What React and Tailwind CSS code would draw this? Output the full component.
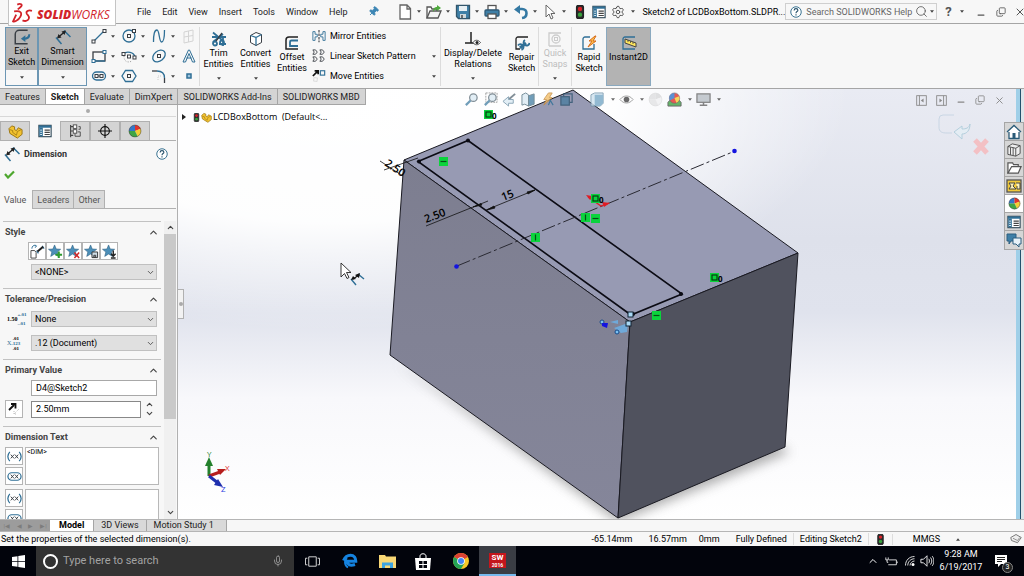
import React from "react";
import {
  ChevronDown,
  ChevronUp,
  Copy,
  Minus,
  Mic,
  Pin,
  Search,
  Settings,
  X,
} from "lucide-react";

const BLUE = "#2f6f96";
const DARK = "#3a3f45";

const Svg = ({ size = 16, children, className = "" }) => (
  <svg
    width={size}
    height={size}
    viewBox="0 0 16 16"
    fill="none"
    stroke={BLUE}
    strokeWidth="1.3"
    className={`shrink-0 ${className}`}
    aria-hidden="true"
  >
    {children}
  </svg>
);

const Caret = ({ className = "", up = false }) => (
  <svg width="4" height="3" viewBox="0 0 5 3" className={`shrink-0 ${className}`} aria-hidden="true">
    <path d={up ? "M0 3h5L2.5 0z" : "M0 0h5L2.5 3z"} fill="#444" />
  </svg>
);

/* ---------- icons ---------- */

const DimensionIcon = ({ size = 18 }) => (
  <Svg size={size}>
    <path d="M1 8.500 6.500 15M9 1.500l6.500 6.500" strokeWidth="1.500" />
    <path d="m3 8.500 7-6" stroke="#222" />
    <path d="m2 9.500 1.500-4.500 3 3.500zM11 1.500 9.500 6 6.500 2.500z" fill="#222" stroke="none" />
  </Svg>
);

const ExitSketchIcon = () => (
  <Svg size={18}>
    <path d="M13 2H5.500A3.500 3.500 0 0 0 2 5.500V14h11" stroke={DARK} />
    <path d="M14.500 5.500c0 3-1.500 4-5 4" stroke={BLUE} strokeWidth="1.8" />
    <path d="m7 9.500 4-3v6z" fill={BLUE} stroke="none" />
  </Svg>
);

const LineIcon = () => (
  <Svg>
    <path d="M2.500 13.500 13 3" />
    <rect x="1" y="12" width="3" height="3" fill="#fff" stroke={DARK} strokeWidth="1" />
    <rect x="12" y="1.500" width="3" height="3" fill="#fff" stroke={DARK} strokeWidth="1" />
  </Svg>
);
const CircleIcon = () => (
  <Svg>
    <circle cx="8" cy="8" r="6" />
    <rect x="6.500" y="6.500" width="3" height="3" stroke={DARK} strokeWidth="1" />
    <rect x="11.500" y="1.500" width="3" height="3" fill="#fff" stroke={DARK} strokeWidth="1" />
  </Svg>
);
const SplineIcon = () => (
  <Svg>
    <path d="M2.500 14c0-8 1-12 3.500-12s2 12 4.500 12 3-4 3-12" />
  </Svg>
);
const PlaneIcon = () => (
  <Svg>
    <path d="M3 4l9-2v11l-9 2zM3 9l9-1.500M7.500 3v11" stroke="#d4d4d4" strokeWidth="1" />
  </Svg>
);
const RectIcon = () => (
  <Svg>
    <rect x="2" y="4" width="12" height="9" stroke={DARK} />
    <path d="M2 13h12" />
    <rect x="12" y="2.500" width="3" height="3" fill="#fff" strokeWidth="1" />
    <rect x="1" y="11.500" width="3" height="3" fill="#fff" strokeWidth="1" />
  </Svg>
);
const ArcIcon = () => (
  <Svg>
    <path d="M2 6a7 6 0 0 1 12 3" />
    <path d="M3 8c0 6 4 7 8 5" stroke="#999" strokeDasharray="1 1.500" strokeWidth="1" />
    <rect x="1" y="4.500" width="3" height="3" fill="#fff" stroke={DARK} strokeWidth="1" />
    <rect x="6.500" y="7" width="3" height="3" stroke={DARK} strokeWidth="1" />
    <rect x="12" y="8" width="3" height="3" fill="#fff" stroke={DARK} strokeWidth="1" />
  </Svg>
);
const EllipseIcon = () => (
  <Svg>
    <ellipse cx="8" cy="8" rx="7" ry="5" transform="rotate(-40 8 8)" />
    <rect x="6.500" y="6.500" width="3" height="3" stroke={DARK} strokeWidth="1" />
  </Svg>
);
const LetterIcon = () => (
  <Svg>
    <path d="M2 14 7.500 2h1L14 14h-2.500L8 5.500 4.500 14zM5.500 10h5" strokeWidth="1" />
  </Svg>
);
const SlotIcon = () => (
  <Svg>
    <rect x="1.500" y="4" width="13" height="8" rx="4" />
    <rect x="4" y="6.500" width="3" height="3" stroke={DARK} strokeWidth="1" />
    <rect x="9" y="6.500" width="3" height="3" stroke={DARK} strokeWidth="1" />
    <path d="M7 8h2" stroke={DARK} strokeWidth="1" />
  </Svg>
);
const PolygonIcon = () => (
  <Svg>
    <path d="M4.500 2.500h7L15 8l-3.500 5.500h-7L1 8z" />
    <rect x="6.500" y="6.500" width="3" height="3" stroke={DARK} strokeWidth="1" />
  </Svg>
);
const FilletIcon = () => (
  <Svg>
    <path d="M1 3h5" stroke={DARK} />
    <path d="M6 3c5 0 7.500 2 7.500 7" />
    <path d="M13.500 10v5" stroke={DARK} />
    <path d="M7 12V8h4" stroke="#ccc" strokeDasharray="1 1" strokeWidth="1" />
  </Svg>
);
const PointIcon = () => (
  <Svg>
    <rect x="6" y="6" width="4" height="4" fill="#9cc3dc" strokeWidth="1.500" />
  </Svg>
);

const TrimIcon = () => (
  <Svg>
    <path d="M2 1.500 11 9M1 6h14M2 11 12 3M12 6v9M8 13h7" strokeWidth="1.800" />
    <circle cx="4" cy="12.500" r="2" strokeWidth="1.800" />
    <circle cx="11" cy="11.500" r="2" strokeWidth="1.800" />
    <path d="M5 10l6-8" stroke={DARK} />
  </Svg>
);
const CubeIcon = () => (
  <Svg>
    <path d="M2.500 4.500 8 1.500l5.500 2v8L8 14.500l-5.500-3z" fill="#fff" stroke={DARK} strokeWidth="1" />
    <path d="M2.500 4.500 8 6.500v8M8 6.500l5.500-3" stroke={BLUE} />
  </Svg>
);
const OffsetIcon = () => (
  <Svg>
    <path d="M14 2H5a3 3 0 0 0-3 3v9h12" stroke="#222" strokeWidth="1.500" />
    <path d="M14 5.500H7.500A1.500 1.500 0 0 0 6 7v4h8" strokeWidth="1.800" />
  </Svg>
);
const MirrorIcon = () => (
  <Svg size={14}>
    <path d="M8 1v14" stroke={DARK} strokeDasharray="3 1" />
    <path d="M1 3v10h2.500V9H6V6H3.500V3zM15 3v10h-2.500V9H10V6h2.500V3z" strokeWidth="1" />
  </Svg>
);
const PatternIcon = () => (
  <Svg size={14}>
    {[1, 9].map((y) =>
      [1, 9].map((x) => (
        <path key={`${x}-${y}`} d={`M${x} ${y}h3l2 2.500-2 2.500h-3l1.500-2.500z`} stroke={DARK} strokeWidth="1" />
      ))
    )}
  </Svg>
);
const MoveIcon = () => (
  <Svg size={14}>
    <path d="M1 8 6 3M3 2h4v4" stroke="#111" strokeWidth="2" />
    <rect x="9.500" y="2" width="5" height="5" />
    <path d="M2 10h4v4H2z" stroke="#bbb" strokeDasharray="1 1" strokeWidth="1" />
  </Svg>
);
const RelationsIcon = () => (
  <Svg>
    <path d="M6 1v11M0 12h10" stroke="#222" strokeWidth="1.500" />
    <path d="M8 11.500c2-3 5-3 7.500 0-2.500 3-5.500 3-7.500 0z" fill="#fff" stroke="#444" strokeWidth="1" />
    <circle cx="12" cy="11.500" r="1.500" fill="#222" stroke="none" />
  </Svg>
);
const RepairIcon = () => (
  <Svg>
    <path d="M14 2H4a2 2 0 0 0-2 2v10h4" stroke="#222" />
    <path d="m6 13 6-5" strokeWidth="3" />
    <path d="M11 5a3 3 0 1 0 4.500 3M4 10.500a3 3 0 1 1 3.500 4.500" strokeWidth="1.800" />
  </Svg>
);
const SnapsIcon = () => (
  <Svg>
    <path d="M2 15V2h12M2 15h12" stroke="#ccc" />
    <circle cx="9" cy="8" r="4" stroke="#ccc" />
    <rect x="7.500" y="6.500" width="3" height="3" stroke="#ccc" strokeWidth="1" />
  </Svg>
);
const RapidIcon = () => (
  <Svg>
    <path d="M9 2H4a2 2 0 0 0-2 2v10h11V9" stroke={BLUE} />
    <path d="m14 1-6 5h3l-4 6 8-6h-3l3-5z" fill="#ffc24d" stroke="#d56b1a" strokeWidth="1" />
  </Svg>
);
const InstantIcon = () => (
  <Svg>
    <path d="M14 2H4a2 2 0 0 0-2 2v10h12" stroke={BLUE} />
    <path d="m4 4 11 4v4L4 8z" fill="#ffe65c" stroke="#444" strokeWidth="1" />
    <path d="M7 5v2M9.500 6v2M12 7v2" stroke="#444" strokeWidth=".8" />
  </Svg>
);

const NewIcon = () => (
  <Svg>
    <path d="M3 1h7l3.500 3.500V15H3zM10 1v4h3.500" fill="#fff" stroke="#666" />
  </Svg>
);
const OpenIcon = () => (
  <Svg>
    <path d="M1 14V3h4l1 2h5v3" fill="#fff" stroke="#555" />
    <path d="m1 14 3-7h11l-3 7z" fill="#f4f4f4" stroke="#555" />
    <path d="M7 8c0-4 2-5 4-5V1l4 3-4 3V5.500C9 5.500 8 6 7 8z" fill="#4faa3d" stroke="none" />
  </Svg>
);
const SaveIcon = () => (
  <Svg>
    <path d="M1.500 1.500h13v13h-11l-2-2z" fill="#3f7fa6" stroke="#33566b" />
    <rect x="4" y="2" width="8" height="5" fill="#e8f0f4" stroke="none" />
    <rect x="5" y="10" width="6" height="4" fill="#cfd8dc" stroke="none" />
    <path d="M7 11v3" stroke="#333" />
  </Svg>
);
const PrintIcon = () => (
  <Svg>
    <rect x="4" y="1.500" width="8" height="5" fill="#fff" stroke="#555" />
    <rect x="1" y="6" width="14" height="6" rx="1" fill="#3f7fa6" stroke="#2f5a76" />
    <rect x="4" y="10" width="8" height="4.500" fill="#fff" stroke="#555" />
  </Svg>
);
const UndoIcon = () => (
  <Svg>
    <path d="M4 5h5c6 0 6 8 0 9" strokeWidth="2.600" stroke="#3579a3" />
    <path d="M1 5.500 7 1v9z" fill="#3579a3" stroke="none" />
  </Svg>
);
const ArrowIcon = () => (
  <Svg>
    <path d="M4 1v12l3-3 2 5 2-1-2-4.500h4z" fill="#fff" stroke="#666" strokeWidth="1" />
  </Svg>
);
const TrafficIcon = ({ size = 14 }) => (
  <Svg size={size}>
    <rect x="4" y="0.500" width="8" height="15" rx="2" fill="#2b2b2b" stroke="#222" />
    <circle cx="8" cy="4.500" r="2.500" fill="#d8232a" stroke="none" />
    <circle cx="8" cy="11" r="2.500" fill="#38a13c" stroke="none" />
  </Svg>
);
const ListIcon = ({ size = 14 }) => (
  <Svg size={size}>
    <rect x="1" y="1.500" width="14" height="13" fill="#fff" stroke="#334b5a" />
    <path d="M1 3h14" strokeWidth="2.500" />
    <path d="M3.500 4v10" strokeWidth="4" />
    <path d="M7.500 7h6M7.500 9.500h6M7.500 12h6" stroke="#444" />
    <path d="M2.500 7h2M2.500 9.500h2M2.500 12h2" stroke="#fff" strokeWidth="1" />
  </Svg>
);
const HelpIcon = ({ size = 12 }) => (
  <Svg size={size}>
    <circle cx="8" cy="8" r="7" fill="#fff" stroke="#36708f" />
    <path d="M5.500 6c0-3.500 5-3 5-.5 0 1.800-2.500 1.800-2.500 4M8 11v1.800" stroke="#26516a" strokeWidth="1.500" />
  </Svg>
);
const BallIcon = ({ size = 15, faded = false }) => (
  <Svg size={size} className={faded ? "opacity-20 grayscale" : ""}>
    <circle cx="8" cy="8" r="7" fill="#d9d9d9" stroke="none" />
    <path d="M8 8V1a7 7 0 0 0-7 7z" fill="#3477c9" stroke="none" />
    <path d="M8 8V1a7 7 0 0 1 6.500 4.500z" fill="#e2332b" stroke="none" />
    <path d="m8 8 6.500-2.500A7 7 0 0 1 11 14.300z" fill="#f4cf35" stroke="none" />
    <path d="M8 8 1 8a7 7 0 0 0 10 6.300z" fill="#3fa544" stroke="none" />
    <circle cx="8" cy="8" r="6.800" stroke="#444" strokeWidth=".6" />
  </Svg>
);
const PartIcon = ({ size = 15 }) => (
  <Svg size={size}>
    <path
      d="M1 5 4 2l3 1v3l2 1 2-3 4 2v5l-5 4-8-5z"
      fill="#f2c230"
      stroke="#9a7410"
      strokeWidth="1"
    />
    <path d="m2 6 3 1v2l4 3 1-4 4-2" stroke="#9a7410" strokeWidth=".8" />
  </Svg>
);
const ConfigIcon = () => (
  <Svg size={14}>
    <path d="M3 1v14M3 3h3M3 8h3M3 13h3" stroke="#444" />
    <rect x="6" y="1" width="4" height="4" fill="#fff" stroke="#444" strokeWidth="1" />
    <rect x="6" y="6.500" width="4" height="4" fill="#fff" stroke="#444" strokeWidth="1" />
    <path d="M12 3h2v3h-2M11 9h3v5H8v-3" stroke="#444" strokeWidth="1" />
  </Svg>
);
const TargetIcon = () => (
  <Svg size={14}>
    <circle cx="8" cy="8" r="5" stroke="#111" />
    <path d="M8 0v16M0 8h16" stroke="#111" />
  </Svg>
);

const StarIcon = ({ kind }) => (
  <Svg size={15}>
    <path
      d="m7 1 1.800 4.300 4.700.3-3.600 3 1.200 4.600L7 10.700l-4.100 2.500 1.200-4.600-3.600-3 4.700-.3z"
      fill="#4c8fb8"
      stroke="#2c5f80"
      strokeWidth=".6"
    />
    {kind === "add" && <path d="M11.500 8v7M8 11.500h7" stroke="#2e9b2e" strokeWidth="2.200" />}
    {kind === "remove" && <path d="m9 9 5 6M14 9l-5 6" stroke="#d42a2a" strokeWidth="1.600" />}
    {kind === "save" && <path d="M8.500 8.500h6v6h-6zM10.500 12h2v2h-2z" fill="#cfdde6" stroke="#333" strokeWidth="1" />}
    {kind === "load" && <path d="M12 7v6M9.500 10.500 12 13l2.500-2.500M9.500 15h5" stroke="#222" strokeWidth="1.500" />}
  </Svg>
);
const ApplyDefaultIcon = () => (
  <Svg size={15}>
    <path d="M1 7h4l1.500 2v6H1z" fill="#fff" stroke="#444" strokeWidth="1" />
    <path d="M2 5c0-3 2-4 4-3M5 1l2 1-1.500 2" strokeWidth="1" />
    <path d="m7 7 2 3M13 2l2 3" />
    <path d="m8 8 6-5" stroke="#222" strokeWidth="2.200" />
  </Svg>
);

const WrapIcon = ({ boxed }) => (
  <Svg size={15}>
    {boxed ? (
      <rect x="1" y="4" width="14" height="8" rx="4" />
    ) : (
      <path d="M3 3C.5 6 .5 10 3 13M13 3c2.500 3 2.500 7 0 10" />
    )}
    <path d="m4 6 3.500 4M7.500 6 4 10M8.500 6l3.500 4M12 6l-3.500 4" stroke={DARK} strokeWidth="1" />
  </Svg>
);

/* ---------- title bar ---------- */

const menus = ["File", "Edit", "View", "Insert", "Tools", "Window", "Help"];

const quickTools = [
  { name: "New", icon: <NewIcon /> },
  { name: "Open", icon: <OpenIcon /> },
  { name: "Save", icon: <SaveIcon /> },
  { name: "Print", icon: <PrintIcon /> },
  { name: "Undo", icon: <UndoIcon /> },
  { name: "Select", icon: <ArrowIcon /> },
];

const Logo = () => (
  <div className="absolute left-2 top-0 z-20 flex h-[26px] w-[108px] items-center border border-t-0 border-[#c4c4c4] bg-white px-[3px]">
    <svg width="21" height="20" viewBox="0 0 20 19" fill="none" stroke="#d2232a" strokeWidth="1.700" aria-hidden="true">
      <path d="M5 1.500c3-1.500 6 0 3 2.500L5.500 6M2 8c6-1 8 1 6 5s-6 5-7 4.500L4 11" />
      <path d="M19 7.500c-3-1-6 0-5 2.500 1 2 3 2.500 2 5s-4 2.500-6 1.500" />
    </svg>
    <span className="ml-1 pt-1 font-['Open_Sans',sans-serif] text-[12px] leading-4 text-[#d2232a]">
      <b className="font-extrabold italic">SOLID</b>
      <i>WORKS</i>
    </span>
  </div>
);

const TitleBar = () => (
  <header className="relative flex h-6 shrink-0 items-center border-b border-[#a5a5a5] bg-[#f7f7f7] pl-[137px]">
    <Logo />
    <nav className="flex gap-[11px]">
      {menus.map((m) => (
        <button key={m}>{m}</button>
      ))}
    </nav>
    <button aria-label="Pin menu" className="ml-5">
      <Pin size={11} className="rotate-45 fill-[#3d86b5] text-[#3d86b5]" />
    </button>
    <div className="ml-2 h-full w-px bg-[#a5a5a5]" />
    <div className="ml-2.5 flex items-center gap-[5px]">
      {quickTools.map((q) => (
        <button key={q.name} aria-label={q.name} className="flex w-6 items-center justify-between">
          {q.icon}
          <Caret />
        </button>
      ))}
      <button aria-label="Rebuild" className="ml-0.5"><TrafficIcon /></button>
      <button aria-label="File properties"><ListIcon /></button>
      <button aria-label="Options" className="flex items-center gap-1.5">
        <Settings size={14} strokeWidth={1.5} className="text-[#444]" />
        <Caret />
      </button>
    </div>
    <span className="ml-2 flex-1 whitespace-nowrap text-black">Sketch2 of LCDBoxBottom.SLDPR...</span>
    <label className="flex h-[17px] w-[152px] shrink-0 items-center border border-[#cfcfcf] pl-1">
      <HelpIcon />
      <input
        aria-label="Search SOLIDWORKS Help"
        placeholder="Search SOLIDWORKS Help"
        className="ml-1 min-w-0 flex-1 bg-transparent outline-none placeholder:text-[#666]"
      />
      <Search size={13} strokeWidth={1.5} className="mr-0.5 shrink-0 text-[#555]" />
      <Caret className="mr-0.5" />
    </label>
    <div className="ml-2 flex shrink-0 items-center text-[#555]">
      <button className="text-[13px] font-bold" aria-label="Help">?</button>
      <Caret className="ml-2 mr-3" />
      <button aria-label="Minimize"><Minus size={10} strokeWidth={3} className="mt-1.5" /></button>
      <button aria-label="Restore" className="ml-2.5"><Copy size={10} className="-scale-y-100" /></button>
      <button aria-label="Close" className="ml-2 mr-1"><X size={12} /></button>
    </div>
  </header>
);

/* ---------- ribbon ---------- */

const sketchTools = [
  [
    { name: "Line", icon: <LineIcon />, more: true },
    { name: "Circle", icon: <CircleIcon />, more: true },
    { name: "Spline", icon: <SplineIcon />, more: true },
    { name: "Plane", icon: <PlaneIcon /> },
  ],
  [
    { name: "Rectangle", icon: <RectIcon />, more: true },
    { name: "Arc", icon: <ArcIcon />, more: true },
    { name: "Ellipse", icon: <EllipseIcon />, more: true },
    { name: "Text", icon: <LetterIcon /> },
  ],
  [
    { name: "Slot", icon: <SlotIcon />, more: true },
    { name: "Polygon", icon: <PolygonIcon /> },
    { name: "Fillet", icon: <FilletIcon />, more: true },
    { name: "Point", icon: <PointIcon /> },
  ],
];

const BigButton = ({ icon, lines, more, className = "" }) => (
  <button className={`flex h-full flex-col items-center text-center leading-[11px] ${className}`}>
    <span className="flex h-[18px] items-center">{icon}</span>
    {lines.map((l) => (
      <span key={l} className="whitespace-nowrap">{l}</span>
    ))}
    {more && <Caret className="mb-0.5 mt-auto" />}
  </button>
);

const ActiveButton = ({ icon, lines, className = "" }) => (
  <button
    className={`flex h-[59px] flex-col items-center border border-[#6c96b3] bg-[#b3b3b3] text-center leading-[11px] ${className}`}
  >
    <span className="flex h-[18px] items-center">{icon}</span>
    {lines.map((l) => (
      <span key={l}>{l}</span>
    ))}
    <span className="mt-auto flex h-[15px] w-full items-center justify-center bg-[#f7f7f7]">
      <Caret />
    </span>
  </button>
);

const Separator = () => <div className="h-[59px] w-px shrink-0 bg-[#dcdcdc]" />;

const Ribbon = () => (
  <section className="flex h-[65px] shrink-0 items-center border-b border-[#a5a5a5] bg-[#f7f7f7] px-[5px] text-black">
    <ActiveButton icon={<ExitSketchIcon />} lines={["Exit", "Sketch"]} className="w-[33px]" />
    <ActiveButton icon={<DimensionIcon size={16} />} lines={["Smart", "Dimension"]} className="w-[49px]" />

    <div className="flex h-[56px] w-[112px] flex-col justify-between pl-1">
      {sketchTools.map((row) => (
        <div key={row[0].name} className="flex">
          {row.map((t) => (
            <button key={t.name} aria-label={t.name} className="flex w-[30px] items-center gap-1 last:w-4">
              {t.icon}
              {t.more && <Caret />}
            </button>
          ))}
        </div>
      ))}
    </div>
    <Separator />

    <div className="flex h-[52px]">
      <BigButton icon={<TrimIcon />} lines={["Trim", "Entities"]} more className="w-[37px]" />
      <BigButton icon={<CubeIcon />} lines={["Convert", "Entities"]} more className="w-[37px]" />
      <BigButton icon={<OffsetIcon />} lines={["Offset", "Entities"]} className="w-[36px] pt-1" />
    </div>
    <div className="ml-0.5 flex h-[54px] w-[128px] flex-col justify-between pr-1">
      <button className="flex items-center gap-1"><MirrorIcon />Mirror Entities</button>
      <button className="flex items-center gap-1">
        <PatternIcon />Linear Sketch Pattern<Caret className="ml-auto" />
      </button>
      <button className="flex items-center gap-1">
        <MoveIcon />Move Entities<Caret className="ml-auto" />
      </button>
    </div>
    <Separator />

    <div className="flex h-[52px]">
      <BigButton icon={<RelationsIcon />} lines={["Display/Delete", "Relations"]} more className="w-[64px]" />
      <BigButton icon={<RepairIcon />} lines={["Repair", "Sketch"]} className="w-[33px] pt-1" />
    </div>
    <Separator />
    <div className="flex h-[52px]">
      <BigButton icon={<SnapsIcon />} lines={["Quick", "Snaps"]} more className="w-8 text-[#bdbdbd]" />
    </div>
    <Separator />
    <div className="flex h-[52px]">
      <BigButton icon={<RapidIcon />} lines={["Rapid", "Sketch"]} className="w-[34px] pt-1" />
    </div>
    <div className="flex h-[59px] border border-[#8aa9bf] bg-[#b3b3b3]">
      <BigButton icon={<InstantIcon />} lines={["Instant2D"]} className="w-[43px] pt-1.5" />
    </div>
  </section>
);

const commandTabs = ["Features", "Sketch", "Evaluate", "DimXpert", "SOLIDWORKS Add-Ins", "SOLIDWORKS MBD"];

const CommandTabs = () => (
  <nav className="absolute left-0 top-0 z-10 flex h-4 border-b border-[#a5a5a5]">
    {commandTabs.map((t) => (
      <button
        key={t}
        className={
          t === "Sketch"
            ? "whitespace-nowrap border-r border-[#a5a5a5] bg-white px-[5px] font-bold"
            : "whitespace-nowrap border-r border-[#a5a5a5] bg-[#d4d4d4] px-[5px]"
        }
      >
        {t}
      </button>
    ))}
  </nav>
);

/* ---------- property manager ---------- */

const managerTabs = [
  { name: "Feature tree", icon: <PartIcon /> },
  { name: "Property manager", icon: <ListIcon /> },
  { name: "Configurations", icon: <ConfigIcon /> },
  { name: "DimXpert manager", icon: <TargetIcon /> },
  { name: "Display manager", icon: <BallIcon size={14} /> },
];

const Group = ({ title, children }) => (
  <section className="border-t border-[#c2c2c2] pb-2">
    <h3 className="flex h-5 items-center justify-between pl-0.5 pr-0.5 font-bold text-[#444]">
      {title}
      <ChevronUp size={11} strokeWidth={2.5} className="text-[#444]" />
    </h3>
    {children}
  </section>
);

const Select = ({ label, value }) => (
  <div className="relative mr-1 min-w-0 flex-1">
    <select
      aria-label={label}
      className="block h-4 w-full appearance-none border border-[#c0c0c0] bg-[#e0e0e0] px-[3px] leading-3 text-black"
    >
      <option>{value}</option>
    </select>
    <ChevronDown size={9} strokeWidth={2.5} className="pointer-events-none absolute right-0.5 top-1 text-[#555]" />
  </div>
);

const IconButton = ({ label, children }) => (
  <button aria-label={label} className="flex h-[18px] w-[18px] items-center justify-center border border-[#b4b4b4] bg-white">
    {children}
  </button>
);

const ToleranceIcon = () => (
  <span className="flex w-7 shrink-0 items-center font-['Liberation_Serif'] text-[6px] font-bold leading-[6px]">
    <span className="pl-1 text-black">1.50</span>
    <span className="flex flex-col gap-1 text-[5px] leading-[5px] text-[#2f6f96]">
      <span>+.01</span>
      <span>-.01</span>
    </span>
  </span>
);
const PrecisionIcon = () => (
  <span className="flex w-7 shrink-0 items-center font-['Liberation_Serif'] text-[5px] leading-[5px]">
    <span className="pl-1 text-[6px] text-[#2f6f96]">X.</span>
    <span className="flex flex-col font-bold text-black">
      <span>.01</span>
      <span className="text-[#2f6f96]">123</span>
      <span>.01</span>
    </span>
  </span>
);

const PropertyManager = () => (
  <aside className="flex w-[178px] shrink-0 flex-col border-r border-[#b0b0b0] bg-[#f7f7f7] pr-px pt-4">
    <div className="flex h-3 shrink-0 items-center justify-center border-b border-[#d8d8d8]">
      <span className="h-1 w-1 rounded-full bg-[#aaa]" />
    </div>

    <div className="mt-1 flex h-5 shrink-0 border-b border-[#b0b0b0]">
      {managerTabs.map((t) => (
        <button
          key={t.name}
          aria-label={t.name}
          className={
            t.name === "Property manager"
              ? "-mb-px flex w-[30px] items-center justify-center bg-[#f7f7f7]"
              : "flex w-[30px] items-center justify-center border-x border-t border-[#b0b0b0] bg-[#d4d4d4]"
          }
        >
          {t.icon}
        </button>
      ))}
    </div>

    <div className="flex h-[26px] shrink-0 items-center gap-1 pl-1 pr-2">
      <DimensionIcon size={16} />
      <h2 className="flex-1 font-bold text-[#333]">Dimension</h2>
      <HelpIcon />
    </div>
    <button aria-label="OK" className="ml-1 flex h-3.5 w-4 shrink-0 items-center">
      <svg width="11" height="9" viewBox="0 0 11 9" fill="none" stroke="#4ea72e" strokeWidth="2.200" aria-hidden="true">
        <path d="m1 4 3 3.500L10 1.500" />
      </svg>
    </button>

    <div className="mt-[9px] flex h-[19px] shrink-0 border-b border-[#b0b0b0] text-[#555]">
      <button className="-mb-px bg-[#f7f7f7] pl-1 pr-1.5">Value</button>
      <button className="border border-b-0 border-[#b0b0b0] bg-[#d9d9d9] px-1">Leaders</button>
      <button className="border border-b-0 border-l-0 border-[#b0b0b0] bg-[#d9d9d9] px-1">Other</button>
    </div>

    <div className="mt-3 flex min-h-0 flex-1">
      <div className="min-w-0 flex-1 overflow-hidden pl-[3px] pr-[3px]">
        <Group title="Style">
          <div className="ml-[25px] flex">
            <IconButton label="Apply default attributes"><ApplyDefaultIcon /></IconButton>
            <IconButton label="Add style"><StarIcon kind="add" /></IconButton>
            <IconButton label="Delete style"><StarIcon kind="remove" /></IconButton>
            <IconButton label="Save style"><StarIcon kind="save" /></IconButton>
            <IconButton label="Load style"><StarIcon kind="load" /></IconButton>
          </div>
          <div className="mt-1 flex pl-7">
            <Select label="Style" value="<NONE>" />
          </div>
        </Group>

        <Group title="Tolerance/Precision">
          <div className="mt-0.5 flex items-center">
            <ToleranceIcon />
            <Select label="Tolerance type" value="None" />
          </div>
          <div className="mt-2 flex items-center">
            <PrecisionIcon />
            <Select label="Unit precision" value=".12 (Document)" />
          </div>
        </Group>

        <Group title="Primary Value">
          <div className="mr-1 flex pl-7">
            <input
              aria-label="Dimension name"
              defaultValue="D4@Sketch2"
              className="h-4 w-full border border-[#a8a8a8] bg-white px-1 text-black"
            />
          </div>
          <div className="mt-1 flex items-center pl-0.5 pr-1">
            <IconButton label="Reverse direction">
              <svg width="14" height="14" viewBox="0 0 14 14" fill="none" aria-hidden="true">
                <path d="m2 8 5-5M4 2h4.500v4.500" stroke="#111" strokeWidth="1.800" />
                <path d="m12 7-5 5M7 9v3h3" stroke="#bbb" strokeDasharray="1 1" />
              </svg>
            </IconButton>
            <input
              aria-label="Dimension value"
              defaultValue="2.50mm"
              className="ml-2 h-[17px] min-w-0 flex-1 border border-[#888] bg-white px-1 text-black"
            />
            <span className="flex w-4 flex-col items-center">
              <button aria-label="Increase"><ChevronUp size={9} strokeWidth={3} className="text-[#444]" /></button>
              <button aria-label="Decrease"><ChevronDown size={9} strokeWidth={3} className="text-[#444]" /></button>
            </span>
          </div>
        </Group>

        <Group title="Dimension Text">
          {["<DIM>", ""].map((text, i) => (
            <div key={i} className="mb-1 flex gap-0.5 pl-0.5 pr-0.5">
              <div className="flex flex-col gap-0.5">
                <IconButton label="Add parentheses"><WrapIcon /></IconButton>
                <IconButton label="Inspection dimension"><WrapIcon boxed /></IconButton>
              </div>
              <textarea
                aria-label={i === 0 ? "Dimension text" : "Lower text"}
                defaultValue={text}
                className="min-w-0 flex-1 resize-none border border-[#b8b8b8] bg-white px-px text-[7px] leading-2 text-black"
              />
            </div>
          ))}
        </Group>
      </div>

      <div className="flex w-3 shrink-0 flex-col items-center bg-[#f0f0f0]">
        <ChevronUp size={9} strokeWidth={3} className="my-0.5 shrink-0 text-[#444]" />
        <div className="h-[62%] w-full bg-[#c9c9c9]" />
        <ChevronDown size={9} strokeWidth={3} className="mb-0.5 mt-auto shrink-0 text-[#444]" />
      </div>
    </div>
  </aside>
);

/* ---------- graphics area ---------- */

const relations = [
  { x: 439, y: 157, kind: "h" },
  { x: 531, y: 233, kind: "v" },
  { x: 581, y: 213, kind: "v" },
  { x: 591, y: 214, kind: "h" },
  { x: 652, y: 311, kind: "h" },
  { x: 484, y: 110, kind: "fix" },
  { x: 591, y: 194, kind: "fix" },
  { x: 710, y: 273, kind: "fix" },
];

const Model = () => (
  <svg
    viewBox="178 89 838 430"
    preserveAspectRatio="xMinYMin slice"
    className="absolute inset-0 h-full w-full"
    fill="none"
    role="img"
    aria-label="LCDBoxBottom model"
  >
    <defs>
      <linearGradient id="sky" x1="0" y1="0" x2="0" y2="1">
        <stop offset="0" stopColor="#e9ebf3" />
        <stop offset=".35" stopColor="#dee1eb" />
        <stop offset=".52" stopColor="#e0e3ed" />
        <stop offset=".72" stopColor="#f8f8fb" />
        <stop offset="1" stopColor="#ffffff" />
      </linearGradient>
      <radialGradient
        id="glow"
        gradientUnits="userSpaceOnUse"
        cx="0"
        cy="0"
        r="1"
        gradientTransform="translate(330 90) scale(520 240)"
      >
        <stop offset="0" stopColor="#fff" />
        <stop offset=".55" stopColor="#fff" stopOpacity=".95" />
        <stop offset="1" stopColor="#fff" stopOpacity="0" />
      </radialGradient>
      <linearGradient id="left" x1="0" y1="0" x2="0" y2="1">
        <stop offset="0" stopColor="#7d7e90" />
        <stop offset="1" stopColor="#85869a" />
      </linearGradient>
      <filter id="soft" x="-20%" y="-20%" width="140%" height="140%">
        <feGaussianBlur stdDeviation="6" />
      </filter>
    </defs>
    <rect x="178" y="89" width="838" height="430" fill="url(#sky)" />
    <rect x="178" y="89" width="838" height="430" fill="url(#glow)" />
    <path d="M396 362 618 522 790 452 770 440 620 500z" fill="#777" opacity=".6" filter="url(#soft)" />

    {/* box faces */}
    <g stroke="#1a1a22" strokeWidth="1" strokeLinejoin="round">
      <path d="M404 160 573 90 798 253 630 322z" fill="#979ab3" />
      <path d="M404 160 630 322 618 518 390 355z" fill="url(#left)" />
      <path d="M630 322 798 253 785 447 618 518z" fill="#50525e" />
    </g>

    {/* sketch */}
    <path d="M418 161.500 468 140.500 682 294 631 315z" stroke="#0b0b14" strokeWidth="1.600" />
    <path d="M457 266 735 151" stroke="#2a2a33" strokeWidth="1" strokeDasharray="14 3 3 3" />
    <g fill="#0b0b14">
      <circle cx="419" cy="161.500" r="2" />
      <circle cx="468" cy="140.500" r="2" />
      <circle cx="681" cy="294" r="2" />
      <circle cx="633" cy="314" r="2" />
    </g>
    <circle cx="456.500" cy="266.500" r="2.300" fill="#1414e0" />
    <circle cx="734.500" cy="151" r="2.300" fill="#1414e0" />

    {/* dimensions */}
    <g stroke="#111" strokeWidth=".8">
      <path d="M426 226l62-25M486 210l49-20M380 161l23 15M384 170l34-12" />
      <path d="m473 207 9-2-1-1.500zM535 190l-8 2 1 2zM487 210l8-2-1-2z" fill="#111" />
    </g>
    <g fill="#000" fontFamily="'Open Sans', sans-serif" fontSize="11" fontWeight="600">
      <text x="426" y="223" transform="rotate(-21 426 223)">2.50</text>
      <text x="503" y="201" transform="rotate(-21 503 201)">15</text>
      <text x="384" y="165" transform="rotate(34 384 165)">2.50</text>
    </g>

    {/* origin */}
    <path d="m588 197 13 9 8-3" stroke="#e01b24" strokeWidth="1.200" />
    <path d="m586 195 6 1-2 4zM610 203l-8-1 2 5z" fill="#e01b24" />

    {/* relation flags */}
    {relations.map((r) => (
      <g key={`${r.x}-${r.y}`}>
        <rect x={r.x} y={r.y} width="9" height="9" fill="#0bd33c" />
        {r.kind === "h" && <path d={`M${r.x + 1.5} ${r.y + 4.5}h6`} stroke="#064d16" strokeWidth="1.200" />}
        {r.kind === "v" && <path d={`M${r.x + 4.5} ${r.y + 1.5}v6`} stroke="#064d16" strokeWidth="1.200" />}
        {r.kind === "fix" && (
          <>
            <rect x={r.x + 2} y={r.y + 2} width="5" height="5" stroke="#063d12" strokeWidth="1.200" />
            <text
              x={r.x + 8}
              y={r.y + 9}
              fontSize="8"
              fontWeight="bold"
              fontFamily="'Open Sans', sans-serif"
              fill="#000"
            >
              0
            </text>
          </>
        )}
      </g>
    ))}

    {/* selected dimension handles */}
    <g fill="#69b6f0" opacity=".75">
      <path d="m610 322 8-2v4zM614 328l14-5-1 9-6 1z" />
    </g>
    <circle cx="602" cy="322" r="2" stroke="#164a8a" fill="#7cc1f2" />
    <circle cx="617" cy="332" r="2" stroke="#164a8a" fill="#7cc1f2" />
    <path d="m602 323 6 0-1 5-5-2z" fill="#1414e0" />
    <rect x="628" y="312" width="5" height="5" fill="#a9d8f5" stroke="#123" />
    <rect x="626" y="321" width="5" height="5" fill="#a9d8f5" stroke="#123" />

    {/* cursor */}
    <path d="M341 263v14l3.500-3.500 2.500 5 2-1-2.500-5h4.500z" fill="#fff" stroke="#222" strokeWidth=".9" />
    <path d="m351 279 5 6M358 274l6 5" stroke="#2f6f96" strokeWidth="1.400" />
    <path d="m353 279 6-4" stroke="#111" strokeWidth="1.200" />
    <path d="m351 280 2-4 3 3zM360 273l-1 5-4-3z" fill="#111" />

    {/* axis triad */}
    <g strokeWidth="3">
      <path d="M209 476v-11" stroke="#23802c" />
      <path d="m209 476 11-4" stroke="#b51d1d" />
      <path d="m209 476 9 7" stroke="#1f2fae" />
    </g>
    <path d="m205 466 4-9 4 9z" fill="#23802c" />
    <path d="m217 469 9 0-6 6z" fill="#b51d1d" />
    <path d="m218 479 5 8-9-2z" fill="#1f2fae" />
    <g fontSize="8" fontFamily="'Open Sans', sans-serif">
      <text x="207" y="457" fill="#23802c">Y</text>
      <text x="225" y="471" fill="#e23333">X</text>
      <text x="221" y="492" fill="#2a3de0">Z</text>
    </g>

    {/* confirmation corner */}
    <path d="M954 115h-11a4 4 0 0 0-4 4v8c0 5 3 6 8 6h5" stroke="#c9d6e4" />
    <path d="m954 132 8-6v3c4 0 7-1 8-5 0 6-3 10-8 10v5z" fill="#e4edf4" stroke="#b4cfdd" />
    <path d="m975 140 12 13m0-13-12 13" stroke="#f3c0c4" strokeWidth="5" />
  </svg>
);

const HudMagnifier = ({ area }) => (
  <Svg size={15}>
    {area && <rect x="3" y="1" width="12" height="10" stroke="#888" strokeDasharray="2 1" strokeWidth="1" />}
    <circle cx="10" cy="6" r="4" fill="#dcebf4" stroke="#62727d" />
    <path d="m7 9-5 5" stroke="#4d86a8" strokeWidth="2.400" />
  </Svg>
);

const HeadsUpToolbar = () => (
  <div className="absolute left-[286px] top-[3px] flex items-center gap-1 opacity-80">
    <button aria-label="Zoom to fit"><HudMagnifier /></button>
    <button aria-label="Zoom to area"><HudMagnifier area /></button>
    <button aria-label="Previous view">
      <Svg size={15}>
        <path d="m14 2-8 7" stroke="#62727d" strokeWidth="2" />
        <path d="m1 10 6-5v3h5v4H7v3z" fill="#dcebf4" stroke="#6c8ea3" strokeWidth="1" />
      </Svg>
    </button>
    <button aria-label="Section view">
      <Svg size={15}>
        <path d="M1 3 5 1l3 2v12l-4-2-3 1z" fill="#dcebf4" stroke="#52707f" strokeWidth="1" />
        <path d="m8 4 6-2v11l-6 2z" fill="#4d86a8" stroke="#52707f" strokeWidth="1" />
      </Svg>
    </button>
    <button aria-label="Dynamic annotation views">
      <Svg size={15}>
        <path d="M9 1 4 8h3l-3 6 9-8h-3l3-5z" fill="#f2bf6a" stroke="#c48a3c" strokeWidth="1" />
        <path d="m9 14 2-5 3 5" />
      </Svg>
    </button>
    <button aria-label="View orientation">
      <Svg size={15}>
        <rect x="2" y="5" width="9" height="9" fill="#4d7ea0" stroke="#2f5570" />
        <path d="M5 5V2h9v9h-3" stroke="#2f5570" />
      </Svg>
    </button>
    <button aria-label="Display style" className="ml-3 flex items-center gap-1.5">
      <Svg size={15}>
        <path d="m1 3 4-2h9v11l-3 3H1z" fill="#cfe2ee" stroke="#6c8ea3" strokeWidth="1" />
        <path d="M5 3h9v9l-3 3H5z" fill="#78a9c6" stroke="none" />
      </Svg>
      <Caret />
    </button>
    <button aria-label="Hide/show items" className="flex items-center gap-1.5">
      <Svg size={15}>
        <path d="M1 8c4-5 10-5 14 0-4 5-10 5-14 0z" stroke="#888" strokeWidth="1" />
        <circle cx="8" cy="8" r="3" fill="#444" stroke="none" />
      </Svg>
      <Caret />
    </button>
    <button aria-label="Edit appearance"><BallIcon faded /></button>
    <button aria-label="Apply scene" className="flex items-center gap-1.5">
      <Svg size={15}>
        <path d="M1 15v-4l3-3h8l3 3v4z" fill="#3fa544" stroke="#444" strokeWidth="1" />
        <circle cx="8" cy="6.500" r="5.500" fill="#e2332b" stroke="#444" strokeWidth=".6" />
        <path d="M8 6.500V1a5.500 5.500 0 0 0-5 8z" fill="#3477c9" stroke="none" />
        <path d="m8 6.500 5-2a5.500 5.500 0 0 1-3 7z" fill="#f4cf35" stroke="none" />
      </Svg>
      <Caret />
    </button>
    <button aria-label="View settings" className="flex items-center gap-1.5">
      <Svg size={15}>
        <rect x="1" y="2" width="14" height="9" fill="#b9c0c6" stroke="#666" />
        <path d="M8 11v3M4 14h8" stroke="#666" strokeWidth="1.600" />
      </Svg>
      <Caret />
    </button>
  </div>
);

const PaneToggle = ({ flip, label }) => (
  <button aria-label={label}>
    <Svg size={11} className={flip ? "-scale-x-100" : ""}>
      <rect x="1" y="1" width="14" height="14" stroke="#888" />
      <path d="M5 1v14" stroke="#888" />
      <path d="m11 5-4 3 4 3z" fill="#888" stroke="none" />
    </Svg>
  </button>
);

const Viewport = () => (
  <main className="relative min-w-0 flex-1 overflow-hidden bg-white">
    <Model />
    <HeadsUpToolbar />
    <div className="absolute right-[11px] top-1 flex items-center gap-[9px] text-[#888]">
      <PaneToggle label="Collapse left pane" />
      <PaneToggle label="Collapse right pane" flip />
      <button aria-label="Minimize document"><Minus size={10} strokeWidth={3} className="mt-1" /></button>
      <button aria-label="Restore document"><Copy size={10} className="-scale-y-100" /></button>
      <button aria-label="Close document"><X size={11} /></button>
    </div>
    <div className="absolute left-1 top-[22px] flex items-center text-black">
      <svg width="4" height="6" viewBox="0 0 4 6" aria-hidden="true"><path d="M0 0v6l4-3z" fill="#222" /></svg>
      <span className="ml-1.5 mr-px flex items-center">
        <TrafficIcon size={9} />
        <PartIcon size={11} />
      </span>
      <span className="font-['Open_Sans',sans-serif]">LCDBoxBottom&nbsp; (Default&lt;...</span>
    </div>
    <div className="absolute -left-px top-[200px] flex h-[30px] w-[7px] items-center justify-center border border-[#b0b0b0] bg-[#f2f2f2]">
      <span className="h-1 w-1 rounded-full bg-[#aaa]" />
    </div>
  </main>
);

const taskIcons = [
  {
    name: "Home",
    icon: (
      <Svg>
        <path d="M1 8 8 1.500 15 8M3 8v6.500h10V8" fill="#fff" stroke="#2b5b78" />
        <rect x="6.500" y="9" width="3" height="5.500" fill="#2b5b78" stroke="none" />
      </Svg>
    ),
  },
  {
    name: "Design library",
    icon: (
      <Svg size={14}>
        <path d="M1 4 6 1l9 2v9l-5 3-9-2z" fill="#eee" stroke="#444" strokeWidth="1" />
        <path d="m1 4 9 2v9M10 6l5-3M4 5v8.500M7 5.500V14" stroke="#444" strokeWidth="1" />
      </Svg>
    ),
  },
  {
    name: "File explorer",
    icon: (
      <Svg size={15}>
        <path d="M1 14V3h5l1 2h5v2" fill="#fff" stroke="#555" />
        <path d="m1 14 4-7h10l-3 7z" fill="#fff" stroke="#555" />
      </Svg>
    ),
  },
  {
    name: "View palette",
    icon: (
      <Svg>
        <rect x="1" y="2" width="14" height="12" fill="#f0c93a" stroke="#555" />
        <path d="M3 5h6L7 8l3 3H3l2-3zM10 5h4v6h-3V8" fill="#fff3b8" stroke="#444" strokeWidth="1" />
      </Svg>
    ),
  },
  { name: "Appearances", icon: <BallIcon size={13} /> },
  { name: "Custom properties", icon: <ListIcon /> },
  {
    name: "Forum",
    icon: (
      <Svg>
        <path d="M1 2h9v7H5l-2 3V9H1z" fill="#3f7fa6" stroke="#2c5f80" strokeWidth="1" />
        <path d="M7 6h8v6h-2v3l-3-3H7z" fill="#e8f2f8" stroke="#2c5f80" strokeWidth="1" />
      </Svg>
    ),
  },
];

const TaskPane = () => (
  <div className="relative w-2 shrink-0 border-r-[3px] border-[#dfe6ea] bg-[#9fcfe8]">
    <div className="ml-auto h-full w-px bg-[#22536e]" />
    <div className="absolute -right-[3px] top-[33px] flex w-5 flex-col border border-[#a5a5a5]">
      {taskIcons.map((t) => (
        <button
          key={t.name}
          aria-label={t.name}
          className={
            t.name === "Appearances"
              ? "flex h-[18px] items-center justify-center border-b border-[#a5a5a5] bg-white"
              : "flex h-[18px] items-center justify-center border-b border-[#a5a5a5] bg-[#d6d6d6] last:border-b-0"
          }
        >
          {t.icon}
        </button>
      ))}
    </div>
  </div>
);

/* ---------- bottom bars ---------- */

const ModelTabs = () => (
  <div className="flex h-[13px] shrink-0 items-stretch border-b border-t border-[#b5b5b5] bg-[#f7f7f7] leading-[11px]">
    <div className="flex w-[50px] items-center justify-around bg-[#9c9c9c] text-[6px] text-[#7d7d7d]">
      <span>|◀</span>
      <span>◀</span>
      <span>▶</span>
      <span>▶|</span>
    </div>
    <button className="bg-white px-[9px] font-bold text-black">Model</button>
    <button className="border-x border-[#a5a5a5] bg-[#d9d9d9] px-[7px]">3D Views</button>
    <button className="border-r border-[#a5a5a5] bg-[#d9d9d9] pl-[7px] pr-3">Motion Study 1</button>
  </div>
);

const StatusBar = () => (
  <div className="flex h-3.5 shrink-0 items-center bg-[#f7f7f7] pl-px pr-0.5 text-black">
    <span className="flex-1">Set the properties of the selected dimension(s).</span>
    <span className="mr-4">-65.14mm</span>
    <span className="mr-3">16.57mm</span>
    <span className="mr-4">0mm</span>
    <span className="border-r border-[#ddd] pr-1.5">Fully Defined</span>
    <span className="border-r border-[#ddd] px-1.5">Editing Sketch2</span>
    <span className="flex w-6 justify-center border-r border-[#ddd] px-1.5"><TrafficIcon size={11} /></span>
    <span className="ml-5">MMGS</span>
    <Caret up className="ml-4" />
    <Svg size={12} className="ml-[50px]">
      <path d="m1 6 7-4 7 4-5 7-8-3z" fill="#eee" stroke="#777" />
      <path d="m4 7 6 3 3-4" stroke="#777" strokeWidth="1" />
    </Svg>
  </div>
);

const Taskbar = () => (
  <footer className="flex h-[30px] shrink-0 items-center bg-[#02040c] text-white">
    <button aria-label="Start" className="flex w-9 justify-center">
      <svg width="13" height="13" viewBox="0 0 13 13" fill="#fff" aria-hidden="true">
        <path d="M0 2l5.500-.8V6H0zM6.300 1.100 13 0v6H6.300zM0 6.800h5.500v5L0 11zM6.300 6.800H13V13l-6.700-1z" />
      </svg>
    </button>
    <label className="flex h-full w-[258px] items-center bg-[#333] pl-[7px] pr-2.5">
      <span className="h-[15px] w-[15px] rounded-full border-2 border-white" />
      <input
        aria-label="Type here to search"
        placeholder="Type here to search"
        className="ml-[5px] min-w-0 flex-1 bg-transparent text-[11px] outline-none placeholder:text-[#a3a3a3]"
      />
      <Mic size={12} strokeWidth={1.5} className="text-[#aaa]" />
    </label>
    <div className="flex h-full items-center">
      <button aria-label="Task view" className="flex w-9 justify-center">
        <Svg size={15}>
          <path d="M4 3h8v10H4zM2.500 4.500H.500v7h2M13.500 4.500h2v7h-2" stroke="#ddd" strokeWidth="1" />
        </Svg>
      </button>
      <button aria-label="Edge" className="flex w-10 justify-center">
        <svg width="16" height="16" viewBox="0 0 16 16" fill="none" aria-hidden="true">
          <path
            d="M1.500 7.500C3 4 5.500 2.200 8.500 2.200c3.500 0 5.300 2.600 5.300 6H4.800c.2 3.200 3 5 8.200 3.300"
            stroke="#1583e0"
            strokeWidth="3"
          />
          <path d="M5 5C2.500 7 2 12 6 14.500" stroke="#1583e0" strokeWidth="2" />
        </svg>
      </button>
      <button aria-label="File Explorer" className="flex w-[34px] justify-center">
        <svg width="17" height="14" viewBox="0 0 17 14" aria-hidden="true">
          <path d="M0 1h6l1 1.500h10V14H0z" fill="#f8d775" />
          <path d="M3 14V8.500h11V14h-3v-2.500H6V14z" fill="#3da4e0" />
        </svg>
      </button>
      <button aria-label="Store" className="flex w-[38px] justify-center">
        <svg width="16" height="17" viewBox="0 0 16 17" aria-hidden="true">
          <path d="M5 5V3c0-3 6-3 6 0v2" fill="none" stroke="#fff" />
          <path d="M0 5h16l-1 12H1z" fill="#fff" />
          <path d="M4 8h3.500v3H4zM8.500 8H12v3H8.500zM4 12h3.500v3H4zM8.500 12H12v3H8.500z" fill="#02040c" />
        </svg>
      </button>
      <button aria-label="Chrome" className="flex w-[37px] justify-center">
        <svg width="16" height="16" viewBox="0 0 16 16" aria-hidden="true">
          <circle cx="8" cy="8" r="8" fill="#f7c927" />
          <path d="M8 8 1.100 4A8 8 0 0 1 14.900 4z" fill="#dc4234" />
          <path d="M8 8 1.100 4A8 8 0 0 0 8 16l3.500-6z" fill="#23a356" />
          <circle cx="8" cy="8" r="3.800" fill="#fff" />
          <circle cx="8" cy="8" r="3" fill="#4285f4" />
        </svg>
      </button>
      <button
        aria-label="SOLIDWORKS"
        className="flex h-full w-[37px] items-center justify-center border-b-2 border-[#76b9ed] bg-[#3a3d44]"
      >
        <span className="flex h-[15px] w-[17px] flex-col items-center justify-center bg-[#c4161c] text-[8px] font-bold leading-[9px]">
          SW
          <span className="text-[5px] leading-[6px]">2016</span>
        </span>
      </button>
    </div>

    <div className="ml-auto flex h-full items-center pr-[13px]">
      <ChevronUp size={12} strokeWidth={2} />
      <Svg size={13} className="ml-1.5">
        <path d="M5 6h9v6H4M15 8v2M1 3v3h3V3M2.500 6v3H4" stroke="#fff" strokeWidth="1" />
      </Svg>
      <Svg size={12} className="ml-1.5">
        <path d="M2 14C2 7 7 2 14 2M5 14c0-5 4-9 9-9M8 14c0-3 3-6 6-6" stroke="#ddd" />
        <circle cx="12" cy="12.500" r="2" fill="#fff" stroke="none" />
      </Svg>
      <Svg size={14} className="ml-1">
        <path d="M1 6h3l4-4v12l-4-4H1zM10 5.500c1 1.500 1 3.500 0 5M12 4c2 2.500 2 5.500 0 8M14 2.500c2.500 3.500 2.500 7.500 0 11" stroke="#fff" strokeWidth="1" />
      </Svg>
      <div className="ml-[5px] w-[44px] whitespace-nowrap text-center leading-[13px]">
        <div>9:28 AM</div>
        <div>6/19/2017</div>
      </div>
      <button aria-label="3 notifications" className="relative ml-3 h-4 w-4">
        <svg width="12" height="12" viewBox="0 0 12 12" aria-hidden="true">
          <path d="M0 0h12v9H6l-3 3V9H0z" fill="#fff" />
          <path d="M2 2.500h8M2 4.500h8M2 6.500h5" stroke="#222" />
        </svg>
        <span className="absolute -bottom-1 -right-0.5 h-[11px] w-[11px] rounded-full border border-[#888] bg-[#222] text-center text-[7px] leading-[9px]">
          3
        </span>
      </button>
    </div>
  </footer>
);

const App = () => (
  <div className="flex h-screen flex-col overflow-hidden bg-[#f7f7f7] font-[Roboto,sans-serif] text-[9px] leading-3 text-[#222]">
    <TitleBar />
    <Ribbon />
    <div className="relative flex min-h-0 flex-1">
      <CommandTabs />
      <PropertyManager />
      <Viewport />
      <TaskPane />
    </div>
    <ModelTabs />
    <StatusBar />
    <Taskbar />
  </div>
);

export default App;
